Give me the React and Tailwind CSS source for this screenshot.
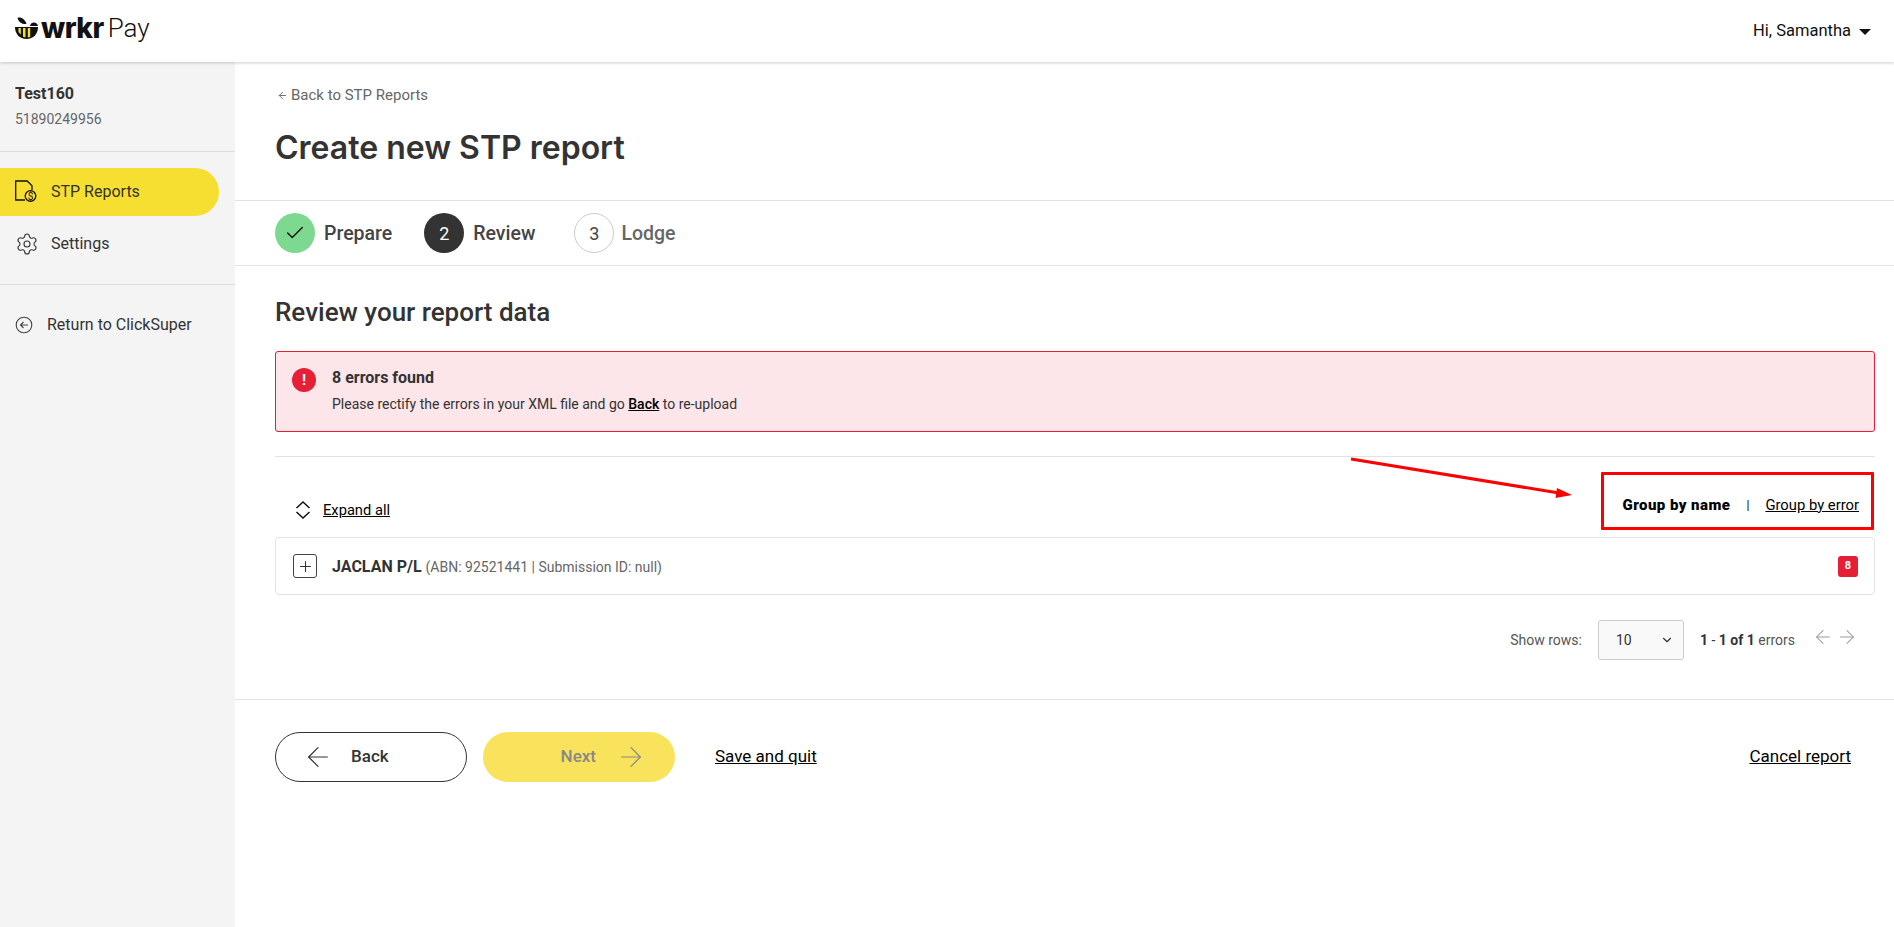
import React from 'react';
import { ArrowLeft, ArrowRight, Check, ChevronDown, Plus, Settings } from 'lucide-react';

const BeeLogo = () => (
  <svg width="23" height="23" viewBox="0 0 23 23" className="shrink-0">
    <path d="M2.500 1C6 -.5 10 2.500 11.500 7 7 7.500 3.500 5 2.500 1z" fill="#111" />
    <path d="M15 9c.5-2.500 2-3.500 4-3.500s3.500 1.200 4 3.500z" fill="#111" />
    <path d="M0 10h23c0 7-4.500 12-11.500 12S0 17 0 10z" fill="#111" />
    <path d="M3.500 11h2.300v6.500L3.500 15z M8 11h2.500v9.500L8 19.700z M12.800 11h2.400v9l-2.400.6z" fill="#f7df32" />
  </svg>
);

const ReportIcon = () => (
  <svg width="24" height="24" viewBox="0 0 24 24" fill="none" stroke="#111" strokeWidth="1.300" className="shrink-0">
    <path d="M10 20H.7V1h11.500l4.800 4.800V10" />
    <circle cx="15.500" cy="16" r="5.300" />
    <text x="15.500" y="19.500" textAnchor="middle" fontSize="10" fill="#111" stroke="none" fontFamily="Roboto, sans-serif">$</text>
  </svg>
);

const ReturnIcon = () => (
  <svg width="18" height="18" viewBox="0 0 18 18" fill="none" stroke="#444" strokeWidth="1.100" className="shrink-0">
    <circle cx="9" cy="9" r="7.800" />
    <path d="M13 9H5.500M8.500 6l-3 3 3 3" />
  </svg>
);

const ExpandIcon = () => (
  <svg width="18" height="20" viewBox="0 0 18 20" fill="none" stroke="#111" strokeWidth="1.500" className="shrink-0">
    <path d="M2.500 8 9 2l6.500 6M2.500 12 9 18l6.500-6" />
  </svg>
);

const Step = ({ circle, label, labelClass, gap }) => (
  <div className={`flex items-center ${gap}`}>
    {circle}
    <span className={`pt-[2px] text-[19.500px] font-medium ${labelClass}`}>{label}</span>
  </div>
);

export default function App() {
  return (
    <div className="relative flex h-screen flex-col overflow-hidden bg-white font-['Roboto',sans-serif] text-[#333]">
      <header className="z-10 flex h-[62px] shrink-0 items-center justify-between bg-white pr-[23px] pl-[15px] shadow-[0_1px_3px_rgba(0,0,0,0.2)]">
        <div className="-mt-[6px] flex items-center">
          <BeeLogo />
          <span className="ml-[3px] font-['Inter',sans-serif] text-[28px] leading-none font-extrabold tracking-[-0.5px] text-[#111]">wrkr</span>
          <span className="ml-[4px] text-[26px] leading-none font-light text-[#111]">Pay</span>
        </div>
        <div className="mt-[1px] flex items-center gap-[8px] text-[16.500px] text-[#111]">
          <span>Hi, Samantha</span>
          <span className="h-0 w-0 border-x-[6px] border-t-[6px] border-x-transparent border-t-[#111]" />
        </div>
      </header>

      <div className="flex min-h-0 flex-1">
        <aside className="w-[235px] shrink-0 bg-[#f4f4f4]">
          <div className="h-[90px] border-b border-[#ddd] pt-[21px] pl-[15px]">
            <div className="text-[16px] leading-[22px] font-bold">Test160</div>
            <div className="mt-[4px] text-[14px] leading-[20px] text-[#666]">51890249956</div>
          </div>
          <nav className="h-[133px] border-b border-[#ddd] pt-[16px]">
            <div className="flex h-[48px] w-[219px] items-center gap-[12px] rounded-r-[24px] bg-[#f7df32] pl-[15px] text-[16px]">
              <ReportIcon />
              <span className="text-[#333]">STP Reports</span>
            </div>
            <div className="mt-[4px] flex h-[48px] items-center gap-[12px] pl-[15px] text-[16px]">
              <Settings size={24} strokeWidth={1.100} className="shrink-0" />
              <span>Settings</span>
            </div>
          </nav>
          <div className="flex items-center gap-[14px] pt-[30px] pl-[15px] text-[16px] leading-[20px]">
            <ReturnIcon />
            <span>Return to ClickSuper</span>
          </div>
        </aside>

        <main className="min-w-0 flex-1">
          <div className="h-[139px] border-b border-[#e2e2e2] px-[40px] pt-[23px]">
            <div className="flex items-center gap-[3px] pl-[2px] text-[15px] leading-[20px] text-[#666]">
              <ArrowLeft size={11} />
              <span>Back to STP Reports</span>
            </div>
            <h1 className="mt-[21px] font-['Inter',sans-serif] text-[32px] leading-[44px] font-semibold text-[#333]">Create new STP report</h1>
          </div>

          <div className="flex h-[65px] items-center border-b border-[#e2e2e2] pl-[40px]">
            <Step
              gap="gap-[9px]"
              label="Prepare"
              labelClass="text-[#444]"
              circle={
                <span className="flex h-[40px] w-[40px] items-center justify-center rounded-full bg-[#7dd98f]">
                  <Check size={22} strokeWidth={1.500} className="text-[#111]" />
                </span>
              }
            />
            <div className="ml-[32px]">
              <Step
                gap="gap-[9px]"
                label="Review"
                labelClass="text-[#444]"
                circle={
                  <span className="flex h-[40px] w-[40px] items-center justify-center rounded-full bg-[#333] text-[18px] text-white">2</span>
                }
              />
            </div>
            <div className="ml-[39px]">
              <Step
                gap="gap-[7px]"
                label="Lodge"
                labelClass="text-[#666]"
                circle={
                  <span className="flex h-[40px] w-[40px] items-center justify-center rounded-full border border-[#ccc] text-[18px] text-[#444]">3</span>
                }
              />
            </div>
          </div>

          <div className="px-[40px] pr-[19px]">
            <h2 className="mt-[30px] text-[26px] leading-[32px] font-medium text-[#333]">Review your report data</h2>

            <div className="mt-[23px] flex h-[81px] items-start gap-[16px] rounded-[3px] border border-[#e51f36] bg-[#fce6e9] pt-[15px] pl-[16px]">
              <span className="mt-[1px] flex h-[24px] w-[24px] shrink-0 items-center justify-center rounded-full bg-[#e51f36] text-[15px] font-bold text-white">!</span>
              <div>
                <div className="text-[16px] leading-[22px] font-bold text-[#333]">8 errors found</div>
                <div className="mt-[5px] text-[14px] leading-[20px]">
                  Please rectify the errors in your XML file and go <span className="font-medium text-black underline">Back</span> to re-upload
                </div>
              </div>
            </div>

            <div className="mt-[24px] border-t border-[#e2e2e2]" />

            <div className="flex h-[80px] items-end justify-between pb-[16px]">
              <div className="flex items-center gap-[11px] pl-[19px] text-[14.700px] text-black">
                <ExpandIcon />
                <span className="underline">Expand all</span>
              </div>
              <div className="mb-[5px] flex items-center pr-[16px] text-[14.800px] text-black">
                <span className="text-[15px] font-black tracking-[0.45px]">Group by name</span>
                <span className="mx-[16px] text-[12px]">|</span>
                <span className="underline">Group by error</span>
              </div>
            </div>

            <div className="flex h-[58px] items-center justify-between rounded-[4px] border border-[#e2e2e2] pr-[16px] pl-[17px]">
              <div className="flex items-center gap-[15px]">
                <span className="flex h-[24px] w-[24px] items-center justify-center rounded-[3px] border-[1.500px] border-[#444]">
                  <Plus size={17} strokeWidth={1.500} />
                </span>
                <div className="pt-[1px]">
                  <span className="text-[16px] font-bold">JACLAN P/L</span>
                  <span className="ml-[4px] text-[14px] text-[#666]">(ABN: 92521441 | Submission ID: null)</span>
                </div>
              </div>
              <span className="flex h-[21px] w-[20px] items-center justify-center rounded-[3px] bg-[#e51f36] text-[11px] font-bold text-white">8</span>
            </div>

            <div className="mt-[25px] flex items-center justify-end pr-[17px] text-[14px]">
              <span className="text-[#555]">Show rows:</span>
              <div className="ml-[16px] flex h-[40px] w-[86px] items-center justify-between rounded-[3px] border border-[#ccc] bg-[#f9f9f9] pr-[9px] pl-[17px] text-[#333]">
                <span>10</span>
                <ChevronDown size={14} className="text-[#333]" />
              </div>
              <span className="ml-[16px]">
                <span className="font-bold">1</span> - <span className="font-bold">1</span> <span className="font-bold">of</span> <span className="font-bold">1</span> <span className="text-[#555]">errors</span>
              </span>
              <div className="-mt-[6px] ml-[17px] flex items-center gap-[2px] text-[#999]">
                <ArrowLeft size={22} strokeWidth={1.100} />
                <ArrowRight size={22} strokeWidth={1.100} />
              </div>
            </div>
          </div>

          <div className="mt-[39px] flex items-center border-t border-[#e2e2e2] pt-[32px] pr-[43px] pl-[40px]">
            <div className="flex h-[50px] w-[192px] items-center rounded-full border border-[#333] pl-[26px] text-[17px] font-medium">
              <ArrowLeft size={32} strokeWidth={0.900} />
              <span className="ml-[17px]">Back</span>
            </div>
            <div className="ml-[16px] flex h-[50px] w-[192px] items-center justify-end rounded-full bg-[#f9e35c] pr-[28px] text-[17px] font-medium text-[#888]">
              <span>Next</span>
              <ArrowRight size={32} strokeWidth={0.900} className="ml-[19px]" />
            </div>
            <span className="ml-[40px] text-[17px] text-black underline">Save and quit</span>
            <span className="ml-auto text-[17px] text-black underline">Cancel report</span>
          </div>
        </main>
      </div>

      {/* red annotation drawn over the screenshot */}
      <div className="absolute top-[472px] left-[1601px] h-[58px] w-[273px] rounded-[1px] border-[3px] border-[#f00]" />
      <svg width="240" height="50" viewBox="0 0 240 50" className="absolute top-[455px] left-[1345px]">
        <path d="M6 4 214 38" stroke="#f00" strokeWidth="3" fill="none" />
        <path d="M227 40 212 33l-1.500 10z" fill="#f00" />
      </svg>
    </div>
  );
}
